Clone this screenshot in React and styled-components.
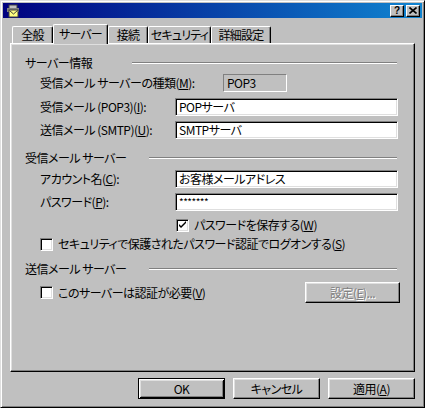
import React from 'react';
import styled, { createGlobalStyle } from 'styled-components';

const GlobalStyle = createGlobalStyle`
  html, body {
    margin: 0;
    padding: 0;
    background: #c0c0c0;
  }
  body {
    font-family: "Noto Sans CJK JP", "Liberation Sans", sans-serif;
    font-size: 12px;
    font-feature-settings: "palt";
    letter-spacing: -0.5px;
    color: #000;
  }
`;

const Window = styled.div`
  width: 425px;
  height: 408px;
  box-sizing: border-box;
  background:
    linear-gradient(90deg, #000080, #1084d0) 2px 2px / 419px 15px no-repeat,
    #c0c0c0;
  border: 1px solid;
  border-color: #dfdfdf #000 #000 #dfdfdf;
  box-shadow: inset 1px 1px #fff, inset -1px -1px #808080;
  padding: 2px;
  display: flex;
  flex-direction: column;
  overflow: hidden;
`;

const Caption = styled.div`
  flex: 0 0 15px;
  display: flex;
  align-items: center;
  padding: 0 2px;
  background: linear-gradient(90deg, #000080, #1084d0);
`;

const TitleIcon = styled.svg`
  width: 16px;
  height: 14px;
  display: block;
`;

const TitleButtons = styled.div`
  margin-left: auto;
  display: flex;
  gap: 2px;
`;

const TitleButton = styled.div`
  width: 14px;
  height: 12px;
  box-sizing: border-box;
  background: #c0c0c0;
  border: 1px solid;
  border-color: #fff #000 #000 #fff;
  box-shadow: inset -1px -1px #808080;
  display: flex;
  align-items: center;
  justify-content: center;
  font-family: "Liberation Sans", sans-serif;
  font-weight: bold;
  font-size: 10px;
  line-height: 1;
  letter-spacing: 0;
`;

const Body = styled.div`
  flex: none;
  padding: 0 7px;
  display: flex;
  flex-direction: column;
`;

const TabRow = styled.div`
  flex: none;
  display: flex;
  align-items: flex-end;
  height: 20px;
  margin-top: 6px;
  margin-bottom: -1px;
  padding-left: 2px;
`;

const Tab = styled.div`
  position: relative;
  z-index: ${(p) => (p.$active ? 1 : 0)};
  flex: none;
  width: ${(p) => p.$w}px;
  height: ${(p) => (p.$active ? 20 : 17)}px;
  box-sizing: border-box;
  background: #c0c0c0;
  border-top: 1px solid #fff;
  border-left: 1px solid #fff;
  border-right: 1px solid #000;
  border-radius: 2px 2px 0 0;
  box-shadow: inset -1px 0 #808080;
  display: flex;
  align-items: ${(p) => (p.$active ? 'flex-start' : 'center')};
  padding-top: ${(p) => (p.$active ? 2 : 0)}px;
  justify-content: center;
  line-height: 14px;
  white-space: nowrap;
  letter-spacing: -0.8px;
  margin-bottom: ${(p) => (p.$active ? 0 : 1)}px;
`;

const Panel = styled.div`
  flex: none;
  height: 329px;
  box-sizing: border-box;
  border: 1px solid;
  border-color: #fff #000 #000 #fff;
  box-shadow: inset -1px -1px #808080, inset 1px 1px #dfdfdf;
  padding: 12px 16px 0 14px;
  display: flex;
  flex-direction: column;
`;

const Heading = styled.div`
  display: flex;
  align-items: center;
  height: 14px;
  line-height: 14px;
  margin-top: ${(p) => p.$mt || 0}px;

  span {
    width: ${(p) => p.$label}px;
    flex: none;
    white-space: nowrap;
  }

  &::after {
    content: '';
    flex: 1;
    height: 0;
    border-top: 1px solid #808080;
    border-bottom: 1px solid #fff;
    margin-right: 1px;
  }
`;

const FieldRow = styled.div`
  display: flex;
  align-items: center;
  height: 18px;
  margin-top: ${(p) => p.$mt}px;
  padding-left: 15px;
`;

const Label = styled.label`
  width: ${(p) => p.$w || 135}px;
  flex: none;
  white-space: nowrap;
  line-height: 14px;
`;

const TextBox = styled.div`
  flex: ${(p) => (p.$w ? 'none' : 1)};
  width: ${(p) => (p.$w ? `${p.$w}px` : 'auto')};
  height: 18px;
  box-sizing: border-box;
  background: ${(p) => (p.$readonly ? '#c0c0c0' : '#fff')};
  border: 1px solid;
  border-color: #808080 #fff #fff #808080;
  box-shadow: ${(p) => (p.$readonly ? 'none' : 'inset 1px 1px #000, inset -1px -1px #dfdfdf')};
  padding-left: 3px;
  display: flex;
  align-items: center;
  line-height: 14px;
  white-space: nowrap;
  font-size: ${(p) => (p.$mask ? 10 : 12)}px;
`;

const CheckRow = styled.div`
  display: flex;
  align-items: center;
  height: ${(p) => p.$h || 16}px;
  margin-top: ${(p) => p.$mt}px;
  padding-left: ${(p) => p.$indent}px;
  line-height: 14px;
  white-space: nowrap;
`;

const Box = styled.span`
  width: 13px;
  height: 13px;
  box-sizing: border-box;
  flex: none;
  background: #fff;
  border: 1px solid;
  border-color: #808080 #fff #fff #808080;
  box-shadow: inset 1px 1px #000, inset -1px -1px #dfdfdf;
  margin-right: 5px;
  display: flex;
  align-items: center;
  justify-content: center;
`;

const Button = styled.div`
  width: ${(p) => p.$w || 87}px;
  height: ${(p) => p.$h || 21}px;
  box-sizing: border-box;
  background: #c0c0c0;
  border: 1px solid;
  border-color: ${(p) => (p.$default ? '#000' : '#fff #000 #000 #fff')};
  box-shadow: ${(p) =>
    p.$default
      ? 'inset 1px 1px #fff, inset -1px -1px #000, inset 2px 2px #dfdfdf, inset -2px -2px #808080'
      : 'inset -1px -1px #808080, inset 1px 1px #dfdfdf'};
  display: flex;
  align-items: center;
  justify-content: center;
  line-height: 14px;
  flex: none;
  color: ${(p) => (p.$disabled ? '#808080' : '#000')};
  text-shadow: ${(p) => (p.$disabled ? '1px 1px #fff' : 'none')};
`;

const SideButton = styled(Button)`
  margin-left: auto;
  margin-right: -2px;
`;

const Footer = styled.div`
  flex: none;
  display: flex;
  justify-content: flex-end;
  gap: 8px;
  margin-top: 6px;
`;

const Icon = () => (
  <TitleIcon viewBox="0 0 16 14">
    <rect x="4" y="1" width="8" height="4" fill="#c0c0c0" stroke="#404040" strokeWidth="1" />
    <rect x="2" y="4" width="12" height="4" fill="#808080" />
    <rect x="4" y="6" width="9" height="7" fill="#ffff80" stroke="#404040" strokeWidth="1" />
    <path d="M4.5 6.5 L8.5 10 L12.5 6.5" fill="none" stroke="#404040" strokeWidth="1" />
  </TitleIcon>
);

const Check = () => (
  <svg width="9" height="9" viewBox="0 0 9 9">
    <path d="M1 3 L1 5 L3 7 L8 2 L8 0 L3 5 Z" fill="#000" />
  </svg>
);

export default function App() {
  return (
    <>
      <GlobalStyle />
      <Window>
        <Caption>
          <Icon />
          <TitleButtons>
            <TitleButton>?</TitleButton>
            <TitleButton>
              <svg width="8" height="7" viewBox="0 0 8 7">
                <path d="M0.5 0.5 L7.5 6.5 M7.5 0.5 L0.5 6.5" stroke="#000" strokeWidth="1.6" />
              </svg>
            </TitleButton>
          </TitleButtons>
        </Caption>
        <Body>
          <TabRow>
            <Tab $w={41}>全般</Tab>
            <Tab $w={55} $active>サーバー</Tab>
            <Tab $w={40}>接続</Tab>
            <Tab $w={63}>セキュリティ</Tab>
            <Tab $w={60}>詳細設定</Tab>
          </TabRow>
          <Panel>
            <Heading $label={107}>
              <span>サーバー情報</span>
            </Heading>
            <FieldRow $mt={4}>
              <Label $w={183}>
                受信メール サーバーの種類(<u>M</u>):
              </Label>
              <TextBox $w={64} $readonly>POP3</TextBox>
            </FieldRow>
            <FieldRow $mt={6}>
              <Label>
                受信メール (POP3)(<u>I</u>):
              </Label>
              <TextBox>POPサーバ</TextBox>
            </FieldRow>
            <FieldRow $mt={5}>
              <Label>
                送信メール (SMTP)(<u>U</u>):
              </Label>
              <TextBox>SMTPサーバ</TextBox>
            </FieldRow>

            <Heading $label={124} $mt={12}>
              <span>受信メール サーバー</span>
            </Heading>
            <FieldRow $mt={5}>
              <Label>
                アカウント名(<u>C</u>):
              </Label>
              <TextBox>お客様メールアドレス</TextBox>
            </FieldRow>
            <FieldRow $mt={5}>
              <Label>
                パスワード(<u>P</u>):
              </Label>
              <TextBox $mask>*******</TextBox>
            </FieldRow>
            <CheckRow $mt={6} $indent={151}>
              <Box>
                <Check />
              </Box>
              パスワードを保存する(<u>W</u>)
            </CheckRow>
            <CheckRow $mt={3} $indent={15}>
              <Box />
              セキュリティで保護されたパスワード認証でログオンする(<u>S</u>)
            </CheckRow>

            <Heading $label={124} $mt={10}>
              <span>送信メール サーバー</span>
            </Heading>
            <CheckRow $mt={6} $indent={15} $h={21}>
              <Box />
              このサーバーは認証が必要(<u>V</u>)
              <SideButton $w={95} $disabled>
                設定(<u>E</u>)...
              </SideButton>
            </CheckRow>
          </Panel>
          <Footer>
            <Button $default>OK</Button>
            <Button>キャンセル</Button>
            <Button>
              適用(<u>A</u>)
            </Button>
          </Footer>
        </Body>
      </Window>
    </>
  );
}
